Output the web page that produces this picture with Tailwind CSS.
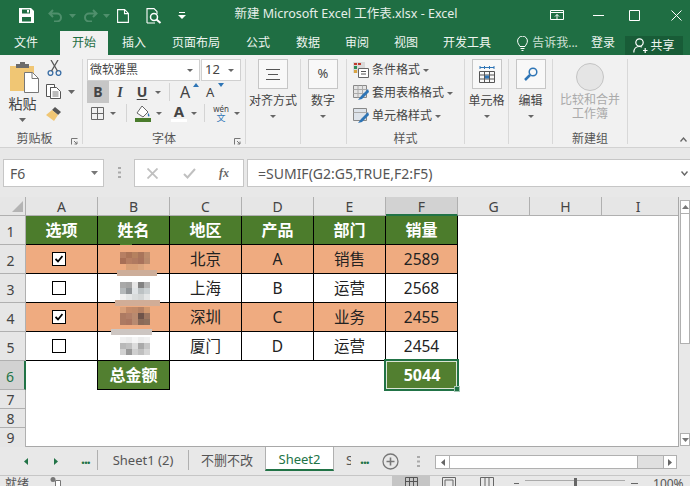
<!DOCTYPE html>
<html lang="zh">
<head>
<meta charset="utf-8">
<script src="https://cdn.jsdelivr.net/npm/@tailwindcss/browser@4"></script>
</head>
<body class="w-[690px] h-[486px] overflow-hidden bg-[#e8e8e8] text-[#444] font-['Noto_Sans','Noto_Sans_CJK_SC',sans-serif]">
<div class="flex flex-col h-[486px]">

<!-- title bar -->
<header class="relative h-[31px] shrink-0 bg-[#1f6e43] flex items-center text-[#e6efe9]">
  <svg class="ml-[19px] w-[15px] h-[15px]" viewBox="0 0 15 15"><path d="M0 0h12l3 3v12H0z" fill="#fff"/><path d="M3 1.500h8v4H3zM3 9h9v4.500H3z" fill="#1f6e43"/><path d="M8 2h2v2.500H8z" fill="#fff"/></svg>
  <svg class="ml-[14px] w-[15px] h-[13px]" viewBox="0 0 15 13" fill="none" stroke="#4f8f6c" stroke-width="2"><path d="M5 1 1.500 4.500 5 8M2 4.500h7a4 4 0 0 1 0 8H6"/></svg>
  <svg class="ml-[6px] w-[7px] h-[4px]" viewBox="0 0 7 4"><path d="M0 0h7L3.500 4z" fill="#4f8f6c"/></svg>
  <svg class="ml-[7px] w-[15px] h-[13px]" viewBox="0 0 15 13" fill="none" stroke="#4f8f6c" stroke-width="2"><path d="M10 1l3.500 3.500L10 8M13 4.500H6a4 4 0 0 0 0 8h3"/></svg>
  <svg class="ml-[5px] w-[7px] h-[4px]" viewBox="0 0 7 4"><path d="M0 0h7L3.500 4z" fill="#4f8f6c"/></svg>
  <svg class="ml-[7px] w-[12px] h-[14px]" viewBox="0 0 12 14" fill="none" stroke="#fff" stroke-width="1.100"><path d="M.6.600h7l3.800 3.800v9H.6zM7.500.600v4h4"/></svg>
  <svg class="ml-[17px] w-[16px] h-[16px]" viewBox="0 0 16 16" fill="none" stroke="#fff" stroke-width="1.100"><path d="M1 15V.600h7l3 3V6M1 15h8"/><circle cx="8" cy="9" r="3.500" stroke-width="1.500"/><path d="M10.500 11.500l4 3.500" stroke-width="2"/></svg>
  <svg class="ml-[16px] w-[8px] h-[7px]" viewBox="0 0 8 7" fill="#fff"><path d="M1 0h6v1H1zM0 3h8L4 7z"/></svg>
  <div class="absolute inset-x-0 top-[5px] text-center text-[12.500px] leading-[18px] pl-[2px]">新建 Microsoft Excel 工作表.xlsx - Excel</div>
  <div class="ml-auto flex items-center">
    <svg class="w-[14px] h-[11px]" viewBox="0 0 14 11" fill="none" stroke="#fff"><path d="M.5.500h13v9H.5zM.5 2.500h13M7 9V4.500M5 6.500l2-2 2 2"/></svg>
    <svg class="ml-[29px] w-[11px] h-[1px]" viewBox="0 0 11 1"><path d="M0 0h11v1H0z" fill="#fff"/></svg>
    <svg class="ml-[25px] w-[11px] h-[11px]" viewBox="0 0 11 11" fill="none" stroke="#fff"><path d="M.5.500h10v10H.5z"/></svg>
    <svg class="ml-[31px] mr-[8px] w-[11px] h-[11px]" viewBox="0 0 11 11" fill="none" stroke="#fff"><path d="M.5.500l10 10M10.500.500l-10 10"/></svg>
  </div>
</header>

<!-- ribbon tabs -->
<nav class="h-[24px] shrink-0 bg-[#1f6e43] flex text-[12px] leading-[24px] text-[#eef5f0] text-center">
  <div class="w-[52px]">文件</div>
  <div class="ml-[8px] w-[48px] bg-[#f1f1f1] text-[#1f6e43]">开始</div>
  <div class="w-[52px]">插入</div>
  <div class="w-[72px]">页面布局</div>
  <div class="w-[52px]">公式</div>
  <div class="w-[48px]">数据</div>
  <div class="w-[50px]">审阅</div>
  <div class="w-[48px]">视图</div>
  <div class="w-[74px]">开发工具</div>
  <div class="w-[81px] flex items-center justify-center gap-[4px] pl-[6px] text-[#cfe0d6]">
    <svg class="w-[11px] h-[15px] shrink-0" viewBox="0 0 11 15" fill="none" stroke="#fff"><path d="M3 10.500C2 8.500.6 7.500.6 5a4.900 4.900 0 0 1 9.800 0c0 2.500-1.400 3.500-2.400 5.500zM3.500 12.500h4M4.500 14.500h2"/></svg>
    <span>告诉我...</span>
  </div>
  <div class="w-[36px]">登录</div>
  <div class="ml-[4px] mt-[5px] w-[58px] h-[19px] bg-[#185c37] flex items-center justify-center gap-[2px] leading-[19px]">
    <svg class="w-[15px] h-[15px]" viewBox="0 0 15 15" fill="none" stroke="#fff" stroke-width="1.200"><circle cx="6.500" cy="4.500" r="3.700"/><path d="M.8 14.500c0-3.500 2-6 5.700-6 1 0 1.800.2 2.500.5M10 12.500h4.500M12.200 10v5"/></svg>
    <span>共享</span>
  </div>
</nav>

<!-- ribbon -->
<section class="relative h-[93px] shrink-0 bg-[#f1f1f1] border-b border-[#d2d2d2] flex pt-[4px] text-[12px] text-[#444]">

  <!-- clipboard -->
  <div class="relative w-[83px] h-[85px] border-r border-[#d8d8d8] flex flex-col shrink-0">
    <div class="h-[73px] shrink-0 flex">
      <div class="w-[44px] flex flex-col items-center">
        <svg class="ml-[4px] mt-[3px] w-[29px] h-[31px]" viewBox="0 0 29 31"><path d="M0 4h24v25H0z" fill="#f0c674"/><path d="M6 2h4V0h5v2h4v4H6z" fill="#6b6b6b"/><path d="M14.500 10.500h8l6 6v14h-14z" fill="#fff" stroke="#777"/><path d="M22 10.500v6h6.500" fill="none" stroke="#777"/></svg>
        <div class="ml-[1px] mt-[1px] text-[14px] leading-[20px]">粘贴</div>
        <svg class="mt-[4px] w-[7px] h-[4px]" viewBox="0 0 7 4"><path d="M0 0h7L3.500 4z" fill="#666"/></svg>
      </div>
      <div class="flex flex-col">
        <svg class="ml-[3px] mt-[1px] w-[15px] h-[16px]" viewBox="0 0 15 16" fill="none" stroke="#3a6ea5" stroke-width="1.300"><circle cx="3.500" cy="13" r="2.400"/><circle cx="11.500" cy="13" r="2.400"/><path d="M4.500 11 11 0" stroke="#555"/><path d="M10.500 11 4 0" stroke="#555"/></svg>
        <div class="mt-[8px] flex items-center">
          <svg class="ml-[2px] w-[15px] h-[15px]" viewBox="0 0 15 15" fill="#fff" stroke="#555"><path d="M.5.500h8v3h-4v9h-4z"/><path d="M4.500 3.500h6l4 4v7h-10z"/><path d="M6.500 8h6M6.500 10h6M6.500 12h6" stroke-width=".8"/></svg>
          <svg class="ml-[7px] w-[7px] h-[4px]" viewBox="0 0 7 4"><path d="M0 0h7L3.500 4z" fill="#666"/></svg>
        </div>
        <svg class="ml-[2px] mt-[7px] w-[16px] h-[16px]" viewBox="0 0 16 16"><path d="M9 1l6 5-3 3-6-5z" fill="#555"/><path d="M6 4l6 5-4 6-8-6z" fill="#f0c674"/></svg>
      </div>
    </div>
    <div class="text-center leading-[14px] pr-[13px] text-[#555]">剪贴板</div>
    <svg class="absolute right-[4px] bottom-[-1px] w-[7px] h-[7px]" viewBox="0 0 7 7" fill="none" stroke="#777"><path d="M.5 6.500v-6h6"/><path d="M3 3l3 3M6 3.500V6H3.500"/></svg>
  </div>

  <!-- font -->
  <div class="relative w-[163px] h-[85px] border-r border-[#d8d8d8] flex flex-col shrink-0 pl-[4px]">
    <div class="h-[73px] shrink-0">
      <div class="flex h-[22px]">
        <div class="w-[113px] h-[22px] bg-white border border-[#d0d0d0] flex items-center justify-between pl-[2px] pr-[6px] text-[12px]">微软雅黑<svg class="w-[6px] h-[3px]" viewBox="0 0 6 3"><path d="M0 0h6L3 3z" fill="#666"/></svg></div>
        <div class="w-[40px] ml-[1px] h-[22px] bg-white border border-[#d0d0d0] flex items-center justify-between pl-[3px] pr-[6px] text-[13px]">12<svg class="w-[6px] h-[3px]" viewBox="0 0 6 3"><path d="M0 0h6L3 3z" fill="#666"/></svg></div>
      </div>
      <div class="flex items-center h-[22px]">
        <div class="w-[22px] h-[22px] bg-[#c6c6c6] text-center text-[14px] leading-[22px] font-bold">B</div>
        <div class="w-[22px] text-center text-[14px] italic font-bold font-['Liberation_Serif',serif]">I</div>
        <div class="w-[22px] text-center text-[14px] leading-[16px] font-bold underline underline-offset-2">U</div>
        <svg class="ml-[2px] w-[6px] h-[3px]" viewBox="0 0 6 3"><path d="M0 0h6L3 3z" fill="#666"/></svg>
        <div class="ml-[8px] w-px h-[18px] bg-[#d4d4d4]"></div>
        <div class="relative ml-[10px] w-[20px] text-[16px] leading-[20px]">A<svg class="absolute right-[1px] top-[1px] w-[6px] h-[4px]" viewBox="0 0 6 4"><path d="M0 4h6L3 0z" fill="#2e75b6"/></svg></div>
        <div class="relative ml-[6px] w-[18px] text-[13px] leading-[20px]">A<svg class="absolute right-[0px] top-[1px] w-[6px] h-[4px]" viewBox="0 0 6 4"><path d="M0 0h6L3 4z" fill="#2e75b6"/></svg></div>
      </div>
      <div class="flex items-center h-[22px] -mt-[1px]">
        <svg class="ml-[4px] w-[13px] h-[13px]" viewBox="0 0 13 13" fill="none" stroke="#666"><path d="M.5.500h12v12H.5zM6.500.500v12M.5 6.500h12"/></svg>
        <svg class="ml-[6px] w-[6px] h-[3px]" viewBox="0 0 6 3"><path d="M0 0h6L3 3z" fill="#666"/></svg>
        <div class="ml-[10px] w-px h-[18px] bg-[#d4d4d4]"></div>
        <svg class="ml-[8px] w-[16px] h-[17px]" viewBox="0 0 16 17"><path d="M7 1l6 6-5 5-6-4z" fill="#fff" stroke="#666"/><path d="M13 8c1.500 1.500 2 3 1 3.500s-1.500-1-1-3.500z" fill="#2e75b6"/><path d="M0 13h16v4H0z" fill="#4a7c2c"/></svg>
        <svg class="ml-[5px] w-[6px] h-[3px]" viewBox="0 0 6 3"><path d="M0 0h6L3 3z" fill="#666"/></svg>
        <div class="ml-[9px] w-[16px] text-center">
          <div class="text-[15px] leading-[15px] font-bold">A</div>
          <div class="h-[3px] bg-white"></div>
        </div>
        <svg class="ml-[4px] w-[6px] h-[3px]" viewBox="0 0 6 3"><path d="M0 0h6L3 3z" fill="#666"/></svg>
        <div class="ml-[7px] w-px h-[18px] bg-[#d4d4d4]"></div>
        <div class="ml-[7px] w-[18px] text-center">
          <div class="text-[8px] leading-[9px]">wén</div>
          <div class="text-[9px] leading-[10px] text-[#2e75b6]">文</div>
        </div>
        <svg class="ml-[4px] w-[6px] h-[3px]" viewBox="0 0 6 3"><path d="M0 0h6L3 3z" fill="#666"/></svg>
      </div>
    </div>
    <div class="text-center leading-[14px] pr-[4px] text-[#555]">字体</div>
    <svg class="absolute right-[4px] bottom-[-1px] w-[7px] h-[7px]" viewBox="0 0 7 7" fill="none" stroke="#777"><path d="M.5 6.500v-6h6"/><path d="M3 3l3 3M6 3.500V6H3.500"/></svg>
  </div>

  <!-- alignment -->
  <div class="w-[55px] h-[85px] border-r border-[#d8d8d8] flex flex-col items-center shrink-0">
    <div class="w-[30px] h-[30px] bg-[#f8f8f8] border border-[#c6c6c6] flex items-center justify-center">
      <svg class="w-[14px] h-[11px]" viewBox="0 0 14 11" fill="none" stroke="#555"><path d="M0 .500h14M2 5.500h10M0 10.500h14"/></svg>
    </div>
    <div class="mt-[2px] leading-[20px] whitespace-nowrap text-[12px]">对齐方式</div>
    <svg class="mt-[4px] w-[6px] h-[3px]" viewBox="0 0 6 3"><path d="M0 0h6L3 3z" fill="#666"/></svg>
  </div>

  <!-- number -->
  <div class="w-[45px] h-[85px] flex flex-col items-center shrink-0 pr-[7px] pl-[6px]">
    <div class="w-[30px] h-[30px] shrink-0 bg-[#f8f8f8] border border-[#c6c6c6] flex items-center justify-center text-[13px]">%</div>
    <div class="mt-[2px] leading-[20px] whitespace-nowrap text-[12px]">数字</div>
    <svg class="mt-[4px] w-[6px] h-[3px]" viewBox="0 0 6 3"><path d="M0 0h6L3 3z" fill="#666"/></svg>
  </div>

  <!-- styles -->
  <div class="w-[119px] h-[85px] border-l border-r border-[#d8d8d8] flex flex-col shrink-0 pl-[6px]">
    <div class="h-[73px] shrink-0 flex flex-col pt-[1px] gap-[3px]">
      <div class="flex items-center h-[20px]">
        <svg class="w-[16px] h-[16px]" viewBox="0 0 16 16"><path d="M0 0h12v11H0z" fill="#d9d9d9"/><path d="M1 1h3v2H1zM5 1h3v2H5z" fill="#c0392b"/><path d="M1 4h3v3H1z" fill="#2e8b57"/><path d="M1 8h3v3H1z" fill="#d9a441"/><path d="M5.500 6.500h10v9h-10z" fill="#fff" stroke="#666"/><path d="M8 9.500h5M8 12h5" stroke="#555"/></svg>
        <span class="ml-[3px]">条件格式</span>
        <svg class="ml-[3px] w-[6px] h-[3px]" viewBox="0 0 6 3"><path d="M0 0h6L3 3z" fill="#666"/></svg>
      </div>
      <div class="flex items-center h-[20px]">
        <svg class="w-[16px] h-[16px]" viewBox="0 0 16 16"><path d="M.5.500h13v12H.5z" fill="#e4e4e4" stroke="#888"/><path d="M5 .500v12M9.500.500v12M.5 4.500h13M.5 8.500h13" stroke="#aaa"/><path d="M15 4 8 11l-3 4 4-1 7-7z" fill="#2e75b6"/></svg>
        <span class="ml-[3px]">套用表格格式</span>
        <svg class="ml-[3px] w-[6px] h-[3px]" viewBox="0 0 6 3"><path d="M0 0h6L3 3z" fill="#666"/></svg>
      </div>
      <div class="flex items-center h-[20px]">
        <svg class="w-[16px] h-[16px]" viewBox="0 0 16 16"><path d="M.5.500h13v12H.5z" fill="#dde3ea" stroke="#888"/><path d="M.5 4.500h13" stroke="#aaa"/><path d="M15 4 8 11l-3 4 4-1 7-7z" fill="#2e75b6"/></svg>
        <span class="ml-[3px]">单元格样式</span>
        <svg class="ml-[3px] w-[6px] h-[3px]" viewBox="0 0 6 3"><path d="M0 0h6L3 3z" fill="#666"/></svg>
      </div>
    </div>
    <div class="text-center leading-[14px] pr-[6px] text-[#555]">样式</div>
  </div>

  <!-- cells -->
  <div class="w-[44px] h-[85px] border-r border-[#d8d8d8] flex flex-col items-center shrink-0">
    <div class="w-[30px] h-[30px] shrink-0 bg-[#f8f8f8] border border-[#c6c6c6] flex items-center justify-center">
      <svg class="w-[16px] h-[17px]" viewBox="0 0 16 17" fill="none" stroke="#555"><path d="M.5 5.500h15v11H.5zM.5 9h15M.5 13h15M5.500 5.500v11M10.500 5.500v11"/><path d="M6 9.500h4v3H6z" fill="#2e75b6" stroke="none"/><path d="M1 1.500h14M1 0v3M15 0v3M5.500 0v3M10.500 0v3" stroke="#2e75b6"/></svg>
    </div>
    <div class="mt-[2px] leading-[20px] whitespace-nowrap">单元格</div>
    <svg class="mt-[4px] w-[6px] h-[3px]" viewBox="0 0 6 3"><path d="M0 0h6L3 3z" fill="#666"/></svg>
  </div>

  <!-- edit -->
  <div class="w-[44px] h-[85px] border-r border-[#d8d8d8] flex flex-col items-center shrink-0">
    <div class="w-[30px] h-[30px] shrink-0 bg-[#f8f8f8] border border-[#c6c6c6] flex items-center justify-center">
      <svg class="w-[14px] h-[14px]" viewBox="0 0 14 14" fill="none" stroke="#2e75b6" stroke-width="1.500"><circle cx="9" cy="5" r="3.800"/><path d="M6 8l-5 5" stroke-width="2.500"/></svg>
    </div>
    <div class="mt-[2px] leading-[20px] whitespace-nowrap">编辑</div>
    <svg class="mt-[4px] w-[6px] h-[3px]" viewBox="0 0 6 3"><path d="M0 0h6L3 3z" fill="#666"/></svg>
  </div>

  <!-- new group -->
  <div class="w-[75px] h-[85px] border-r border-[#d8d8d8] flex flex-col items-center shrink-0">
    <div class="h-[73px] shrink-0 flex flex-col items-center">
      <div class="mt-[4px] w-[28px] h-[28px] shrink-0 rounded-full bg-[#e5e5e5] border border-[#c4c4c4]"></div>
      <div class="mt-[2px] leading-[14px] text-center text-[#aaa] whitespace-nowrap">比较和合并<br>工作簿</div>
    </div>
    <div class="leading-[14px] text-[#555]">新建组</div>
  </div>

  <svg class="absolute right-[3px] bottom-[5px] w-[7px] h-[5px]" viewBox="0 0 7 5" fill="none" stroke="#666" stroke-width="1.300"><path d="M.5 4.500 3.500 1l3 3.500"/></svg>
</section>

<!-- formula bar -->
<div class="h-[49px] shrink-0 pt-[11px] pb-[10px] flex text-[14px]">
  <div class="ml-[3px] w-[101px] bg-white border border-[#c6c6c6] flex items-center justify-between pl-[6px] pr-[5px] text-[#555]">F6<svg class="w-[7px] h-[4px]" viewBox="0 0 7 4"><path d="M0 0h7L3.500 4z" fill="#777"/></svg></div>
  <svg class="ml-[14px] mt-[8px] w-[3px] h-[11px]" viewBox="0 0 3 11" fill="#aaa"><path d="M0 0h3v2H0zM0 4.500h3v2H0zM0 9h3v2H0z"/></svg>
  <div class="ml-[13px] w-[110px] bg-white border border-[#c6c6c6] flex items-center">
    <svg class="ml-[12px] w-[11px] h-[11px]" viewBox="0 0 11 11" fill="none" stroke="#c0c0c0" stroke-width="1.800"><path d="M.5.500l10 10M10.500.500l-10 10"/></svg>
    <svg class="ml-[25px] w-[13px] h-[11px]" viewBox="0 0 13 11" fill="none" stroke="#c0c0c0" stroke-width="2"><path d="M1 6l3.500 3.500L12 1"/></svg>
    <span class="ml-[23px] italic font-bold text-[12px] text-[#666] font-['Liberation_Serif',serif]">fx</span>
  </div>
  <div class="ml-[3px] flex-1 bg-white border-y border-l border-[#c6c6c6] flex items-center justify-between pl-[10px] pr-[2px] text-[#555] text-[14px]">
    <span>=SUMIF(G2:G5,TRUE,F2:F5)</span>
    <svg class="w-[7px] h-[5px]" viewBox="0 0 7 5" fill="none" stroke="#666" stroke-width="1.400"><path d="M.5.500 3.500 4l3-3.500"/></svg>
  </div>
</div>

<!-- sheet -->
<main class="h-[250px] shrink-0 flex text-[15.500px] text-[#222]">
  <div class="w-[679px] shrink-0 border-r border-b border-[#a8a8a8] bg-white flex flex-col">
    <!-- column heads -->
    <div class="flex h-[19px] shrink-0 text-[14px] leading-[19px] text-[#444] text-center bg-[#e6e6e6] border-b border-[#b0b0b0]">
      <div class="w-[26px] border-r border-[#b0b0b0] relative"><svg class="absolute left-[12px] top-[4px] w-[11px] h-[11px]" viewBox="0 0 11 11"><path d="M11 0v11H0z" fill="#b4b4b4"/></svg></div>
      <div class="w-[72px] border-r border-[#b0b0b0]">A</div>
      <div class="w-[72px] border-r border-[#b0b0b0]">B</div>
      <div class="w-[72px] border-r border-[#b0b0b0]">C</div>
      <div class="w-[72px] border-r border-[#b0b0b0]">D</div>
      <div class="w-[72px] border-r border-[#b0b0b0]">E</div>
      <div class="w-[72px] bg-[#d2d2d2] border-r border-[#b0b0b0] -mb-px border-b-2 border-b-[#217346]">F</div>
      <div class="w-[72px] border-r border-[#b0b0b0]">G</div>
      <div class="w-[72px] border-r border-[#b0b0b0]">H</div>
      <div class="w-[72px]">I</div>
    </div>
    <!-- row 1 -->
    <div class="flex h-[29px] shrink-0 text-center leading-[28px]">
      <div class="w-[26px] pr-[4px] pt-[2px] text-[14px] text-[#444] bg-[#e6e6e6] border-r border-b border-[#b0b0b0]">1</div>
      <div class="w-[72px] bg-[#4c7c2c] text-white text-[16px] font-bold border-r border-b border-black">选项</div>
      <div class="relative w-[72px] bg-[#4c7c2c] text-white text-[16px] font-bold border-r border-b border-black">姓名</div>
      <div class="w-[72px] bg-[#4c7c2c] text-white text-[16px] font-bold border-r border-b border-black">地区</div>
      <div class="w-[72px] bg-[#4c7c2c] text-white text-[16px] font-bold border-r border-b border-black">产品</div>
      <div class="w-[72px] bg-[#4c7c2c] text-white text-[16px] font-bold border-r border-b border-black">部门</div>
      <div class="w-[72px] bg-[#4c7c2c] text-white text-[16px] font-bold border-r border-b border-black">销量</div>
    </div>
    <!-- row 2 -->
    <div class="flex h-[29px] shrink-0 text-center leading-[28px]">
      <div class="w-[26px] pr-[4px] pt-[2px] text-[14px] text-[#444] bg-[#e6e6e6] border-r border-b border-[#b0b0b0]">2</div>
      <div class="w-[72px] bg-[#efab80] border-r border-b border-black flex items-center justify-center pr-[6px]">
        <div class="w-[14px] h-[14px] bg-white border border-black flex items-center justify-center"><svg class="w-[8px] h-[8px]" viewBox="0 0 8 8" fill="none" stroke="#000" stroke-width="1.800"><path d="M.5 4 3 6.500 7.500 1"/></svg></div>
      </div>
      <div class="relative w-[72px] bg-[#efab80] border-r border-b border-black">
        <div class="absolute left-[22px] top-[-2px] w-[12px] h-[2px] bg-[#4c7c2c]"></div>
        <div class="absolute left-[22px] top-[7px] grid grid-cols-[repeat(5,6px)] auto-rows-[6px]">
          <i class="bg-[#b77f63]"></i><i class="bg-[#ab7458]"></i><i class="bg-[#b5815f]"></i><i class="bg-[#a9755b]"></i><i class="bg-[#bd8c6c]"></i>
          <i class="bg-[#a86f56]"></i><i class="bg-[#b67e62]"></i><i class="bg-[#b07a60]"></i><i class="bg-[#a9735c]"></i><i class="bg-[#b98a6c]"></i>
          <i class="bg-[#efab80]"></i><i class="bg-[#d9a077]"></i><i class="bg-[#d9a077]"></i><i class="bg-[#dba67f]"></i><i class="bg-[#e8ad85]"></i>
        </div>
        <div class="absolute z-10 left-[19px] top-[25px] w-[40px] h-[6px] bg-[#cdae9a]"></div>
      </div>
      <div class="w-[72px] bg-[#efab80] border-r border-b border-black">北京</div>
      <div class="w-[72px] bg-[#efab80] border-r border-b border-black">A</div>
      <div class="w-[72px] bg-[#efab80] border-r border-b border-black">销售</div>
      <div class="w-[72px] bg-[#efab80] border-r border-b border-black">2589</div>
    </div>
    <!-- row 3 -->
    <div class="flex h-[29px] shrink-0 text-center leading-[28px]">
      <div class="w-[26px] pr-[4px] pt-[2px] text-[14px] text-[#444] bg-[#e6e6e6] border-r border-b border-[#b0b0b0]">3</div>
      <div class="w-[72px] bg-white border-r border-b border-black flex items-center justify-center pr-[6px]">
        <div class="w-[14px] h-[14px] bg-white border border-black"></div>
      </div>
      <div class="relative w-[72px] bg-white border-r border-b border-black">
        <div class="absolute left-[22px] top-[8px] grid grid-cols-[repeat(5,6px)] auto-rows-[6px]">
          <i class="bg-[#a9a9a9]"></i><i class="bg-[#a4a4a4]"></i><i class="bg-[#e6e6e6]"></i><i class="bg-[#828282]"></i><i class="bg-[#b4b4b4]"></i>
          <i class="bg-[#b4b8ba]"></i><i class="bg-[#8f9396]"></i><i class="bg-[#dfe3e5]"></i><i class="bg-[#bcc2c4]"></i><i class="bg-[#ccd2d4]"></i>
          <i class="bg-[#f0f0f0]"></i><i class="bg-[#e4e6e6]"></i><i class="bg-[#d9dcdc]"></i><i class="bg-[#d3d6d6]"></i><i class="bg-[#e4e6e6]"></i>
        </div>
        <div class="absolute z-10 left-[17px] top-[26px] w-[45px] h-[6px] bg-[#d1ad97]"></div>
      </div>
      <div class="w-[72px] bg-white border-r border-b border-black">上海</div>
      <div class="w-[72px] bg-white border-r border-b border-black">B</div>
      <div class="w-[72px] bg-white border-r border-b border-black">运营</div>
      <div class="w-[72px] bg-white border-r border-b border-black">2568</div>
    </div>
    <!-- row 4 -->
    <div class="flex h-[29px] shrink-0 text-center leading-[28px]">
      <div class="w-[26px] pr-[4px] pt-[2px] text-[14px] text-[#444] bg-[#e6e6e6] border-r border-b border-[#b0b0b0]">4</div>
      <div class="w-[72px] bg-[#efab80] border-r border-b border-black flex items-center justify-center pr-[6px]">
        <div class="w-[14px] h-[14px] bg-white border border-black flex items-center justify-center"><svg class="w-[8px] h-[8px]" viewBox="0 0 8 8" fill="none" stroke="#000" stroke-width="1.800"><path d="M.5 4 3 6.500 7.500 1"/></svg></div>
      </div>
      <div class="relative w-[72px] bg-[#efab80] border-r border-b border-black">
        <div class="absolute left-[22px] top-[4px] grid grid-cols-[repeat(5,6px)] auto-rows-[6px]">
          <i class="bg-[#d7a07b]"></i><i class="bg-[#c48b6a]"></i><i class="bg-[#c08a69]"></i><i class="bg-[#b58265]"></i><i class="bg-[#d0986f]"></i>
          <i class="bg-[#ad7a62]"></i><i class="bg-[#b27f68]"></i><i class="bg-[#b98a6f]"></i><i class="bg-[#6f544a]"></i><i class="bg-[#9d7660]"></i>
          <i class="bg-[#ad7a62]"></i><i class="bg-[#ab7660]"></i><i class="bg-[#b88a70]"></i><i class="bg-[#8a6a58]"></i><i class="bg-[#8d6f5c]"></i>
        </div>
        <div class="absolute z-10 left-[13px] top-[26px] w-[41px] h-[6px] bg-[#cdc6c2]"></div>
      </div>
      <div class="w-[72px] bg-[#efab80] border-r border-b border-black">深圳</div>
      <div class="w-[72px] bg-[#efab80] border-r border-b border-black">C</div>
      <div class="w-[72px] bg-[#efab80] border-r border-b border-black">业务</div>
      <div class="w-[72px] bg-[#efab80] border-r border-b border-black">2455</div>
    </div>
    <!-- row 5 -->
    <div class="flex h-[29px] shrink-0 text-center leading-[28px]">
      <div class="w-[26px] pr-[4px] pt-[2px] text-[14px] text-[#444] bg-[#e6e6e6] border-r border-b border-[#b0b0b0]">5</div>
      <div class="w-[72px] bg-white border-r border-b border-black flex items-center justify-center pr-[6px]">
        <div class="w-[14px] h-[14px] bg-white border border-black"></div>
      </div>
      <div class="relative w-[72px] bg-white border-r border-b border-black">
        <div class="absolute left-[22px] top-[5px] grid grid-cols-[repeat(5,6px)] auto-rows-[6px]">
          <i class="bg-[#f0f0f0]"></i><i class="bg-[#ececec]"></i><i class="bg-[#f5f5f5]"></i><i class="bg-[#ececec]"></i><i class="bg-[#f0f0f0]"></i>
          <i class="bg-[#b9b9b9]"></i><i class="bg-[#c0c0c0]"></i><i class="bg-[#dcdcdc]"></i><i class="bg-[#a9a9a9]"></i><i class="bg-[#c6c6c6]"></i>
          <i class="bg-[#d2d2d2]"></i><i class="bg-[#9a9a9a]"></i><i class="bg-[#cfcfcf]"></i><i class="bg-[#c0c0c0]"></i><i class="bg-[#d6d6d6]"></i>
        </div>
      </div>
      <div class="w-[72px] bg-white border-r border-b border-black">厦门</div>
      <div class="w-[72px] bg-white border-r border-b border-black">D</div>
      <div class="w-[72px] bg-white border-r border-b border-black">运营</div>
      <div class="w-[72px] bg-white border-r border-b border-black">2454</div>
    </div>
    <!-- row 6 -->
    <div class="flex h-[29px] shrink-0 text-center leading-[28px]">
      <div class="w-[26px] pr-[4px] pt-[2px] text-[14px] text-[#217346] bg-[#d2d2d2] border-r-2 border-r-[#217346] border-b border-b-[#b0b0b0]">6</div>
      <div class="w-[72px] border-r border-black"></div>
      <div class="w-[72px] bg-[#527f30] text-white text-[16px] font-bold border-r border-b border-black">总金额</div>
      <div class="w-[216px]"></div>
      <div class="relative w-[72px] bg-[#527f30] text-white text-[16px] font-bold">
        5044
        <div class="absolute -left-[2px] -top-[2px] -right-[1px] -bottom-[1px] border-2 border-[#217346]"><div class="w-full h-full border border-white/80"></div></div>
        <div class="absolute -right-[2px] -bottom-[2px] w-[6px] h-[6px] bg-[#217346] border border-white/60"></div>
      </div>
    </div>
    <!-- rows 7-9 -->
    <div class="flex h-[19px] shrink-0 text-[14px] leading-[19px] text-[#444]"><div class="w-[26px] pr-[4px] text-center bg-[#e6e6e6] border-r border-b border-[#b0b0b0]">7</div></div>
    <div class="flex h-[19px] shrink-0 text-[14px] leading-[19px] text-[#444]"><div class="w-[26px] pr-[4px] text-center bg-[#e6e6e6] border-r border-b border-[#b0b0b0]">8</div></div>
    <div class="flex h-[19px] shrink-0 text-[14px] leading-[19px] text-[#444]"><div class="w-[26px] pr-[4px] text-center bg-[#e6e6e6] border-r border-[#b0b0b0]">9</div></div>
  </div>
  <!-- vertical scrollbar -->
  <div class="flex-1 flex flex-col pt-[3px] pl-[1px] pb-[1px]">
    <div class="h-[14px] bg-white border border-[#b0b0b0] flex items-center justify-center shrink-0"><svg class="w-[7px] h-[4px]" viewBox="0 0 7 4"><path d="M0 4h7L3.500 0z" fill="#777"/></svg></div>
    <div class="h-[130px] bg-white border-x border-b border-[#b0b0b0] shrink-0"></div>
    <div class="flex-1"></div>
    <div class="h-[13px] bg-white border border-[#b0b0b0] flex items-center justify-center shrink-0"><svg class="w-[7px] h-[4px]" viewBox="0 0 7 4"><path d="M0 0h7L3.500 4z" fill="#777"/></svg></div>
  </div>
</main>

<!-- sheet tabs -->
<div class="h-[28px] shrink-0 flex items-start text-[13px] text-[#555]">
  <svg class="ml-[24px] mt-[11px] w-[4px] h-[7px]" viewBox="0 0 4 7"><path d="M4 0v7L0 3.500z" fill="#217346"/></svg>
  <svg class="ml-[26px] mt-[11px] w-[4px] h-[7px]" viewBox="0 0 4 7"><path d="M0 0v7l4-3.500z" fill="#217346"/></svg>
  <span class="ml-[23px] w-[11px] text-[14px] text-[#217346] font-bold leading-[24px] tracking-[-1px]">...</span>
  <div class="ml-[5px] mt-[3px] w-px h-[20px] bg-[#b0b0b0]"></div>
  <div class="w-[90px] text-center leading-[26px]">Sheet1 (2)</div>
  <div class="mt-[3px] w-px h-[20px] bg-[#b0b0b0]"></div>
  <div class="w-[76px] text-center leading-[26px]">不删不改</div>
  <div class="w-[69px] h-[24px] bg-white border-x border-[#b0b0b0] border-b-2 border-b-[#217346] text-center text-[#217346] leading-[24px]">Sheet2</div>
  <span class="ml-[12px] w-[5px] overflow-hidden leading-[26px]">S</span>
  <span class="ml-[9px] w-[12px] text-[14px] text-[#217346] font-bold leading-[24px] tracking-[-1px]">...</span>
  <svg class="ml-[10px] mt-[6px] w-[17px] h-[17px]" viewBox="0 0 17 17" fill="none" stroke="#777" stroke-width="1.300"><circle cx="8.500" cy="8.500" r="7.500"/><path d="M4.500 8.500h8M8.500 4.500v8" stroke-width="1.600"/></svg>
  <svg class="ml-[18px] mt-[9px] w-[3px] h-[11px]" viewBox="0 0 3 11" fill="#aaa"><path d="M0 0h3v2H0zM0 4.500h3v2H0zM0 9h3v2H0z"/></svg>
  <div class="ml-[15px] mt-[8px] w-[242px] h-[14px] border border-[#b0b0b0] flex bg-[#e0e0e0]">
    <div class="w-[14px] bg-white border-r border-[#b0b0b0] flex items-center justify-center"><svg class="w-[4px] h-[7px]" viewBox="0 0 4 7"><path d="M4 0v7L0 3.500z" fill="#666"/></svg></div>
    <div class="w-[188px] bg-white border-r border-[#b0b0b0]"></div>
    <div class="flex-1"></div>
    <div class="w-[13px] bg-white border-l border-[#b0b0b0] flex items-center justify-center"><svg class="w-[4px] h-[7px]" viewBox="0 0 4 7"><path d="M0 0v7l4-3.500z" fill="#666"/></svg></div>
  </div>
</div>

<!-- status bar -->
<footer class="h-[11px] shrink-0 border-t border-[#c6c6c6] flex overflow-hidden text-[12px] leading-[16px] text-[#555]">
  <span class="ml-[5px]">就绪</span>
  <svg class="ml-[21px] mt-[1px] w-[11px] h-[10px]" viewBox="0 0 11 10"><circle cx="3" cy="2.500" r="2.500" fill="#777"/><path d="M5.500 3.500h5v6h-5z" fill="#fff" stroke="#777"/></svg>
  <div class="ml-[331px] w-[38px] h-[11px] bg-[#c5c5c5] flex justify-center pt-[1px]"><svg class="w-[13px] h-[11px]" viewBox="0 0 13 11" fill="none" stroke="#555"><path d="M.5.500h12v10H.5zM.5 4.500h12M4.500.500v10M8.500.500v10"/></svg></div>
  <svg class="ml-[12px] mt-[1px] w-[14px] h-[11px]" viewBox="0 0 14 11" fill="none" stroke="#666"><path d="M.5.500h13v10H.5zM3 3h8v8H3z"/></svg>
  <svg class="ml-[24px] mt-[1px] w-[14px] h-[11px]" viewBox="0 0 14 11" fill="none" stroke="#666"><path d="M.5.500h13v10H.5zM5 .500v10M9 .500v10"/></svg>
  <div class="ml-[20px] mt-[7px] w-[5px] h-px bg-[#666]"></div>
  <div class="relative ml-[6px] mt-[4px] w-[100px] h-px bg-[#aaa]"><div class="absolute left-[49px] -top-[2px] w-[3px] h-[8px] bg-[#666]"></div></div>
  <div class="ml-[6px] mt-[7px] w-[7px] h-px bg-[#666]"></div>
  <span class="ml-[15px] text-[12px]">100%</span>
</footer>
</div>
</body>
</html>
